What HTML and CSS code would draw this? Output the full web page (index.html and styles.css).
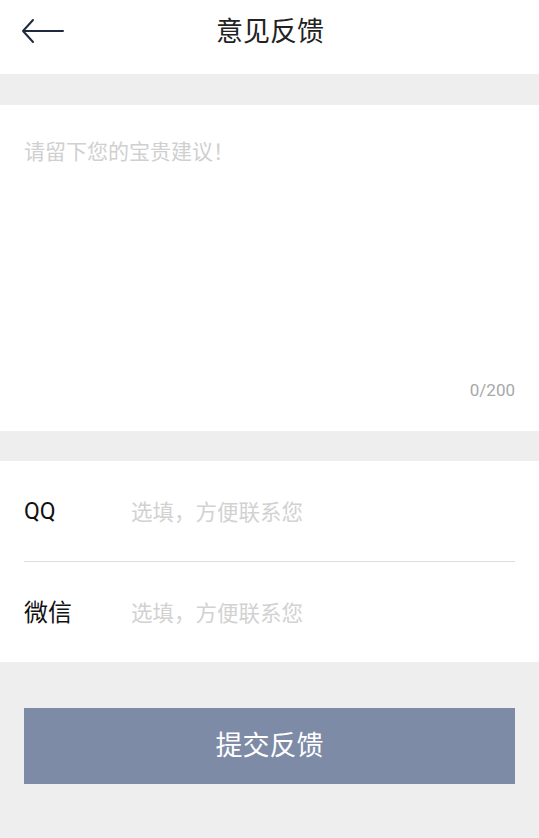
FILE: index.html
```html
<!DOCTYPE html>
<html lang="zh-CN">
<head>
    <meta charset="UTF-8">
    <title>意见反馈</title>
    <link rel="stylesheet" href="styles.css">
</head>
<body>
<div class="header">
    <span class="back">
        <svg width="44" height="26" viewBox="0 0 44 26">
            <path d="M12 2 L2 13 L12 24 M2 13 L42 13" fill="none" stroke="#1f2940" stroke-width="2" stroke-linecap="round" stroke-linejoin="round"/>
        </svg>
    </span>
    <span class="title">意见反馈</span>
</div>
<div class="gap"></div>
<div class="content">
    <div class="placeholder">请留下您的宝贵建议！</div>
    <div class="count">0/200</div>
</div>
<div class="gap"></div>
<ul class="contact">
    <li class="row">
        <span class="label">QQ</span>
        <span class="input">选填，方便联系您</span>
    </li>
    <li class="row">
        <span class="label">微信</span>
        <span class="input">选填，方便联系您</span>
    </li>
</ul>
<div class="footer">
    <div class="submit">提交反馈</div>
</div>
</body>
</html>
```

FILE: styles.css
```css
*{padding: 0px; margin: 0px}
html, body {
    height: 100%;
}
body {
    background-color: #eeeeee;
    font-family: "Noto Sans CJK SC", "Noto Sans", sans-serif;
    display: flex;
    flex-direction: column;
}
.header {
    height: 74px;
    background-color: #ffffff;
    display: flex;
    align-items: center;
    justify-content: center;
    position: relative;
}
.back {
    position: absolute;
    left: 21px;
    top: 18px;
    line-height: 0;
}
.title {
    font-size: 27px;
    color: #222222;
    margin-top: -16px;
    padding-left: 1px;
}
.gap {
    height: 31px;
}
.content {
    height: 326px;
    background-color: #ffffff;
    padding: 0 24px;
    display: flex;
    flex-direction: column;
}
.placeholder {
    font-size: 21px;
    color: #d0d0d0;
    margin-top: 30px;
    line-height: 30px;
}
.count {
    margin-top: auto;
    margin-bottom: 31px;
    text-align: right;
    font-family: Roboto, sans-serif;
    font-size: 17px;
    color: #a8a8a8;
}
.gap + .contact {
    margin-top: -1px;
}
.contact {
    list-style-type: none;
    background-color: #ffffff;
    padding: 0 24px;
}
.row {
    height: 100px;
    display: flex;
    align-items: center;
}
.row + .row {
    border-top: 1px solid #dddddd;
}
.label {
    width: 107px;
    font-size: 24px;
    color: #111111;
    margin-top: -4px;
}
.row:first-child .label {
    font-family: Roboto, sans-serif;
    font-size: 23px;
    margin-top: 0;
}
.input {
    font-size: 21.5px;
    color: #d2d2d2;
    margin-top: -2px;
}
.footer {
    padding: 46px 24px 0;
}
.submit {
    height: 76px;
    padding-bottom: 6px;
    box-sizing: border-box;
    background-color: #7d8ba6;
    color: #ffffff;
    font-size: 27px;
    display: flex;
    align-items: center;
    justify-content: center;
}
```
